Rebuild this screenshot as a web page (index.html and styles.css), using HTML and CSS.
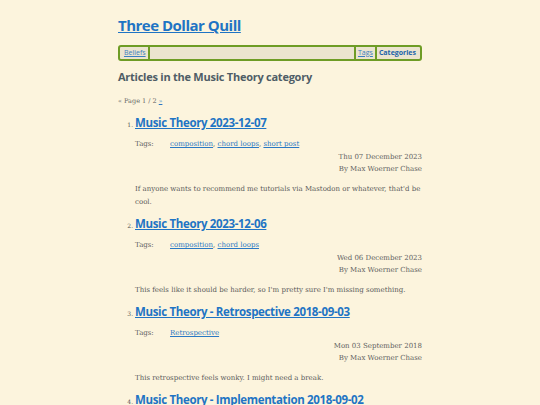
FILE: index.html
```html
<!DOCTYPE html>
<html>
<head>
<meta charset="utf-8">
<link rel="stylesheet" href="styles.css">
</head>
<body>
<div class="page">
  <header class="site-header">
    <h1 class="site-title"><a href="#">Three Dollar Quill</a></h1>
    <nav class="nav">
      <a class="nav-link" href="#">Beliefs</a>
      <span class="nav-sep"></span>
      <span class="nav-fill"></span>
      <span class="nav-sep"></span>
      <a class="nav-link" href="#">Tags</a>
      <span class="nav-sep"></span>
      <a class="nav-link current" href="#">Categories</a>
    </nav>
  </header>
  <main>
    <h2 class="cat-heading">Articles in the Music Theory category</h2>
    <p class="pager">« Page 1 / 2 <a href="#">»</a></p>
    <ol class="articles">
      <li class="article">
        <h3 class="art-title"><a href="#">Music Theory 2023-12-07</a></h3>
        <div class="tags"><span class="tags-label">Tags:</span><span class="tags-list"><a href="#">composition</a>, <a href="#">chord loops</a>, <a href="#">short post</a></span></div>
        <div class="meta"><div>Thu 07 December 2023</div><div>By Max Woerner Chase</div></div>
        <p class="summary">If anyone wants to recommend me tutorials via Mastodon or whatever, that'd be cool.</p>
      </li>
      <li class="article">
        <h3 class="art-title"><a href="#">Music Theory 2023-12-06</a></h3>
        <div class="tags"><span class="tags-label">Tags:</span><span class="tags-list"><a href="#">composition</a>, <a href="#">chord loops</a></span></div>
        <div class="meta"><div>Wed 06 December 2023</div><div>By Max Woerner Chase</div></div>
        <p class="summary">This feels like it should be harder, so I'm pretty sure I'm missing something.</p>
      </li>
      <li class="article">
        <h3 class="art-title"><a href="#">Music Theory - Retrospective 2018-09-03</a></h3>
        <div class="tags"><span class="tags-label">Tags:</span><span class="tags-list"><a href="#">Retrospective</a></span></div>
        <div class="meta"><div>Mon 03 September 2018</div><div>By Max Woerner Chase</div></div>
        <p class="summary">This retrospective feels wonky. I might need a break.</p>
      </li>
      <li class="article">
        <h3 class="art-title"><a href="#">Music Theory - Implementation 2018-09-02</a></h3>
      </li>
    </ol>
  </main>
</div>
</body>
</html>
```
FILE: styles.css
```css
html, body {
  margin: 0;
  padding: 0;
  background: #fcf4dd;
}
body {
  font-family: "DejaVu Serif", serif;
  color: #555;
  font-size: 7px;
}
.page {
  width: 304px;
  margin: 0 auto;
  padding-top: 14px;
}
a { color: #2a78c4; }
.site-title {
  margin: 0;
  font-family: "Open Sans", sans-serif;
  font-weight: 700;
  font-size: 15px;
  letter-spacing: -0.5px;
  line-height: 22px;
}
.site-title a { color: #1f74c4; }
.nav {
  margin-top: 9px;
  display: flex;
  align-items: stretch;
  border: 2px solid #6e9c25;
  border-radius: 3px;
  background: #ebe4cf;
  height: 12px;
  font-family: "Open Sans", sans-serif;
  font-size: 7px;
  line-height: 12px;
  padding: 0 2px;
}
.nav-link { padding: 0 2px; color: #3b7fc0; }
.nav-link.current { font-weight: 700; text-decoration: none; color: #2163a8; }
.nav-sep { width: 2px; background: #6e9c25; }
.nav-fill { flex: 1; }
.cat-heading {
  margin: 8px 0 0;
  font-family: "Open Sans", sans-serif;
  font-weight: 700;
  font-size: 11px;
  letter-spacing: -0.25px;
  line-height: 16px;
  color: #4f5d66;
}
.pager {
  margin: 11px 0 0;
  font-size: 6.5px;
  line-height: 10px;
  color: #666;
}
.pager a { font-size: 6px; }
.articles {
  margin: 0;
  padding-left: 17px;
}
.article { margin-top: 6px; }
.article:first-child { margin-top: 8px; }
.article::marker { font-size: 6px; color: #555; }
.art-title {
  margin: 0;
  font-family: "Open Sans", sans-serif;
  font-weight: 700;
  font-size: 11.5px;
  letter-spacing: -0.35px;
  line-height: 17px;
}
.art-title a { color: #1f74c4; }
.tags {
  display: flex;
  margin-top: 8px;
  line-height: 10px;
  color: #5f5f5f;
}
.tags-label { width: 35px; }
.meta {
  margin-top: 2px;
  text-align: right;
  line-height: 12px;
  color: #5f5f5f;
}
.summary {
  margin: 8px 0 0;
  line-height: 13px;
  color: #5a5a5a;
}
```
